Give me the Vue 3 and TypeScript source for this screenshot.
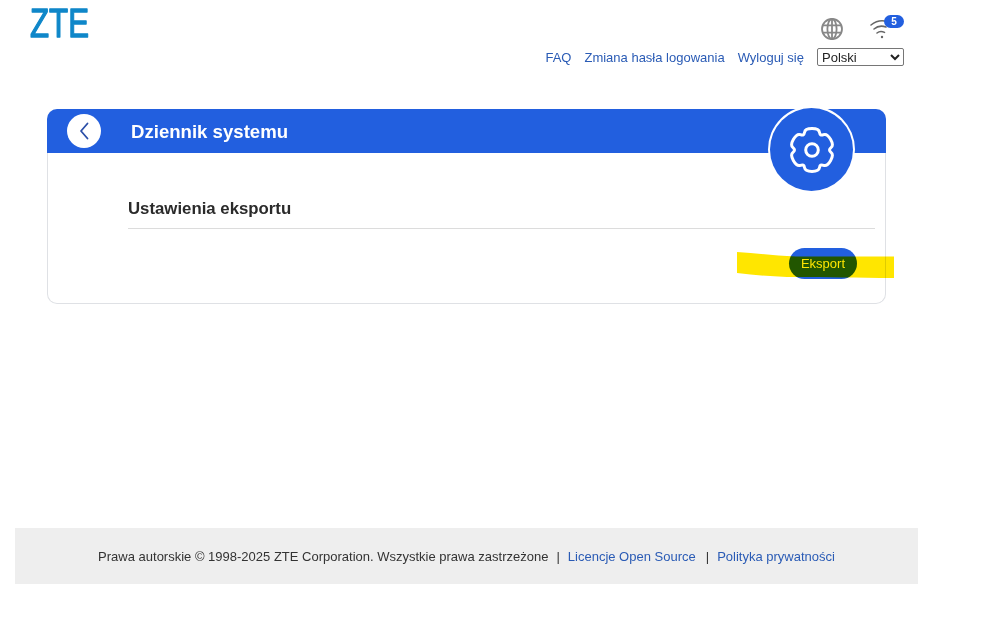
<script setup lang="ts">
const links: string[] = ['FAQ', 'Zmiana hasła logowania', 'Wyloguj się']

function buildGear(): string {
  const c = 23
  const pts: [number, number][] = []
  const pol = (deg: number, r: number): [number, number] => {
    const a = (deg * Math.PI) / 180
    return [c + r * Math.cos(a), c + r * Math.sin(a)]
  }
  for (let i = 0; i < 6; i++) {
    const a = -90 + i * 60
    pts.push(pol(a - 18, 22.5), pol(a + 18, 22.5), pol(a + 30, 16))
  }
  const mid = (p: [number, number], q: [number, number]): string =>
    `${((p[0] + q[0]) / 2).toFixed(2)} ${((p[1] + q[1]) / 2).toFixed(2)}`
  let d = `M${mid(pts[pts.length - 1], pts[0])}`
  pts.forEach((p, i) => {
    const q = pts[(i + 1) % pts.length]
    d += `Q${p[0].toFixed(2)} ${p[1].toFixed(2)} ${mid(p, q)}`
  })
  return d + 'Z'
}
const gearPath = buildGear()
</script>

<template>
  <div class="page">
    <header class="top">
      <svg class="logo" width="80" height="48" viewBox="0 0 80 48" role="img" aria-label="ZTE">
        <text x="1" y="38" textLength="59" lengthAdjust="spacingAndGlyphs" class="logo-text">ZTE</text>
      </svg>
      <div class="top-right">
        <div class="status">
          <svg class="globe" width="24" height="24" viewBox="0 0 24 24" fill="none" stroke="#888" stroke-width="1.800">
            <circle cx="12" cy="12" r="10" />
            <ellipse cx="12" cy="12" rx="4.600" ry="10" />
            <path d="M12 2v20M2.600 8.400h18.800M2.600 15.600h18.800" />
          </svg>
          <div class="wifi">
            <svg width="24" height="24" viewBox="0 0 24 24" fill="none" stroke="#666" stroke-width="1.600" stroke-linecap="round">
              <path d="M3 9C8 5 14 4 19 5.500" />
              <path d="M6 13C9.500 10 14 9.600 18 11" />
              <path d="M9 17C11 15.400 14 15.200 16.500 16.400" />
              <circle cx="14" cy="21" r="1.200" fill="#666" stroke="none" />
            </svg>
            <span class="badge">5</span>
          </div>
        </div>
        <nav class="links">
          <a v-for="l in links" :key="l" href="#">{{ l }}</a>
          <select class="lang">
            <option>Polski</option>
          </select>
        </nav>
      </div>
    </header>

    <main class="card">
      <div class="card-head">
        <button class="back" aria-label="Wstecz">
          <svg width="12" height="20" viewBox="0 0 12 20" fill="none" stroke="#2b4fa8" stroke-width="1.800" stroke-linecap="round" stroke-linejoin="round">
            <path d="M9.500 2.500 3 10l6.500 7.500" />
          </svg>
        </button>
        <h1>Dziennik systemu</h1>
      </div>
      <div class="gear-badge">
        <svg width="46" height="46" viewBox="0 0 46 46" fill="none" stroke="#fff" stroke-width="3" stroke-linejoin="round">
          <path :d="gearPath" />
          <circle cx="23" cy="23" r="6.300" />
        </svg>
      </div>
      <div class="card-body">
        <h2>Ustawienia eksportu</h2>
        <div class="actions">
          <button class="export">Eksport</button>
        </div>
      </div>
    </main>

    <footer class="foot">
      <span>Prawa autorskie © 1998-2025 ZTE Corporation. Wszystkie prawa zastrzeżone</span>
      <span class="sep">|</span>
      <a href="#">Licencje Open Source</a>
      <span class="sep sep2">|</span>
      <a href="#">Polityka prywatności</a>
    </footer>

    <svg class="marker" width="160" height="28" viewBox="0 0 160 28">
      <path d="M1 1C20 2 38 5 60 5.500L158 5.500V27C120 27 90 26 60 26C38 26 20 24 1 22Z" fill="#ffe600" />
    </svg>
  </div>
</template>

<style>
html, body {
  margin: 0;
  background: #fff;
}
</style>

<style scoped>
.page {
  position: relative;
  width: 999px;
  height: 638px;
  overflow: hidden;
  font-family: "Liberation Sans", Arial, sans-serif;
  box-sizing: border-box;
}
.top {
  display: flex;
  justify-content: space-between;
  align-items: flex-start;
  height: 109px;
  width: 904px;
  padding-left: 29px;
  box-sizing: border-box;
}
.logo {
  margin-top: -1px;
}
.logo-text {
  font-family: "Liberation Sans", Arial, sans-serif;
  font-size: 41px;
  font-weight: 400;
  fill: #0f87c9;
  stroke: #0f87c9;
  stroke-width: 1.300;
  stroke-linejoin: round;
}
.top-right {
  display: flex;
  flex-direction: column;
  align-items: flex-end;
}
.status {
  display: flex;
  align-items: flex-start;
  padding-top: 17px;
  height: 31px;
}
.globe {
  margin-right: 24px;
  display: block;
}
.wifi {
  position: relative;
  width: 36px;
  margin-top: -1px;
}
.wifi svg {
  display: block;
}
.badge {
  position: absolute;
  right: 0;
  top: -1px;
  width: 20px;
  height: 13px;
  border-radius: 7px;
  background: #225fdf;
  color: #fff;
  font-size: 10px;
  font-weight: 700;
  line-height: 13px;
  text-align: center;
}
.links {
  display: flex;
  align-items: center;
  gap: 13px;
  height: 18px;
}
.links a {
  color: #2a5bb5;
  font-size: 13px;
  text-decoration: none;
}
.lang {
  width: 87px;
  height: 18px;
  font-family: "Liberation Sans", Arial, sans-serif;
  font-size: 13px;
  color: #222;
  background: #fff;
  border: 1px solid #767676;
  border-radius: 2px;
  padding: 0;
}
.card {
  position: relative;
  margin-left: 47px;
  width: 839px;
  height: 195px;
  box-sizing: border-box;
  border: 1px solid #dfe1e5;
  border-top: 0;
  border-radius: 10px;
}
.card-head {
  display: flex;
  align-items: center;
  height: 44px;
  margin: 0 -1px;
  padding-left: 20px;
  background: #225fdf;
  border-radius: 10px 10px 0 0;
}
.back {
  display: flex;
  align-items: center;
  justify-content: center;
  width: 34px;
  height: 34px;
  margin-top: -1px;
  padding: 0;
  border: 0;
  border-radius: 50%;
  background: #fff;
}
h1 {
  margin: 1px 0 0 30px;
  color: #fff;
  font-size: 18.6px;
  font-weight: 700;
}
.gear-badge {
  position: absolute;
  left: 722px;
  top: -1px;
  display: flex;
  align-items: center;
  justify-content: center;
  width: 83px;
  height: 83px;
  border-radius: 50%;
  background: #225fdf;
  box-shadow: 0 0 0 2px #fff;
}
.card-body {
  padding: 45px 10px 0 80px;
}
h2 {
  margin: 0;
  height: 30px;
  border-bottom: 1px solid #dcdcdc;
  color: #2b2b2b;
  font-size: 16.8px;
  font-weight: 700;
  line-height: 21px;
}
.actions {
  display: flex;
  justify-content: flex-end;
  margin-top: 19px;
  padding-right: 18px;
}
.export {
  width: 68px;
  height: 31px;
  padding: 0;
  border: 0;
  border-radius: 16px;
  background: #225fdf;
  color: #fff;
  font-family: "Liberation Sans", Arial, sans-serif;
  font-size: 13px;
}
.foot {
  display: flex;
  align-items: center;
  justify-content: center;
  width: 903px;
  height: 56px;
  margin: 224px 0 0 15px;
  background: #eeeeee;
  color: #333;
  font-size: 13px;
  white-space: pre;
}
.foot a {
  color: #2a5bb5;
  text-decoration: none;
}
.sep {
  margin: 0 8px;
}
.sep2 {
  margin-left: 10px;
}
.marker {
  position: absolute;
  left: 736px;
  top: 251px;
  mix-blend-mode: multiply;
  pointer-events: none;
}
</style>
